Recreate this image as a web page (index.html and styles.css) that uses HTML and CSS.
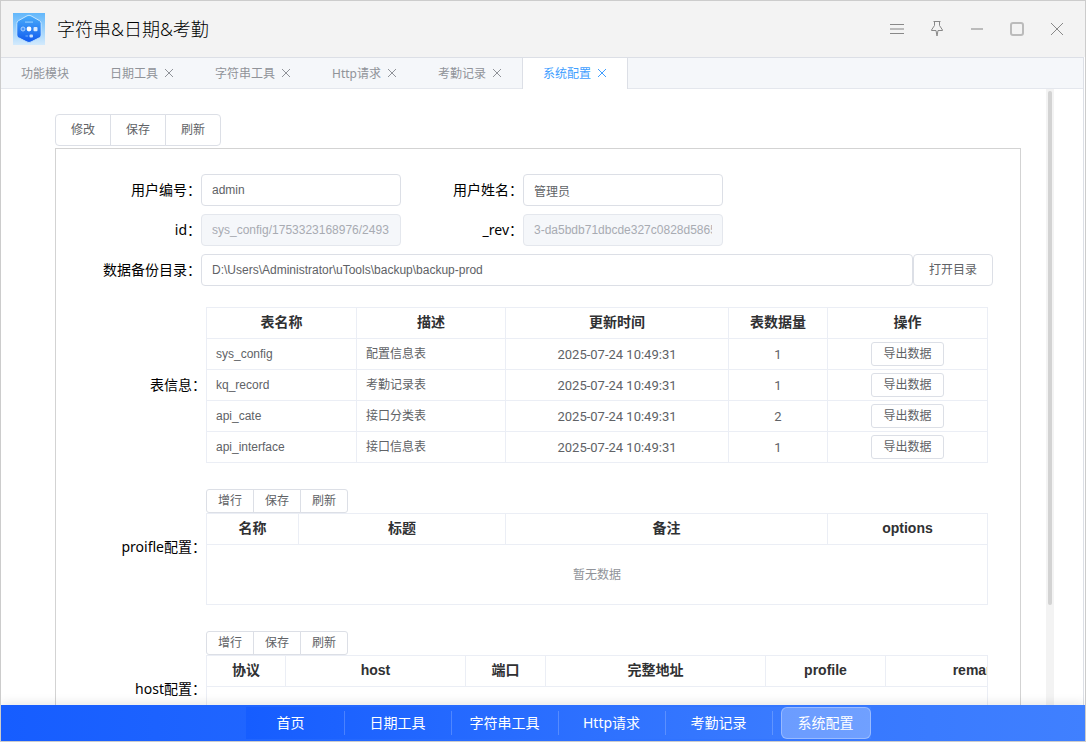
FILE: index.html
```html
<!DOCTYPE html>
<html lang="zh-CN">
<head>
  <meta charset="UTF-8" />
  <title>字符串&amp;日期&amp;考勤</title>
  <link rel="stylesheet" href="styles.css">
</head>
<body>
  <header class="titlebar">
    <svg class="logo" viewBox="0 0 32 32" aria-hidden="true">
      <defs>
        <linearGradient id="logoBg" x1="0" y1="0" x2="0" y2="1">
          <stop offset="0" stop-color="#62b7fb" />
          <stop offset="1" stop-color="#d3eafc" />
        </linearGradient>
        <linearGradient id="logoHex" x1="0" y1="0" x2="0" y2="1">
          <stop offset="0" stop-color="#4aaefb" />
          <stop offset="1" stop-color="#1059ee" />
        </linearGradient>
      </defs>
      <rect width="32" height="32" fill="url(#logoBg)" />
      <path d="M14 2.800q2-1.100 4 0l8.600 4.900q1.600 1 1.600 2.800v11.500q0 1.800-1.600 2.700l-8.600 4.300q-2 1-4 0l-8.600-4.300q-1.600-.9-1.600-2.700v-11.500q0-1.800 1.600-2.800z" fill="url(#logoHex)" stroke="#c4e5ff" />
      <rect x="12" y="8.500" width="8" height="1.200" fill="#8ecbff" />
      <circle cx="10" cy="16" r="2" fill="#4a96fa" stroke="#a8d0ff" />
      <circle cx="16" cy="16" r="2.400" fill="#fff" />
      <rect x="20.500" y="14" width="4" height="4.200" rx="1" fill="#d8eaff" />
      <rect x="12.500" y="22.500" width="2.500" height="1" fill="#75b3ff" />
      <rect x="16.500" y="21.500" width="3.500" height="3" rx="1" fill="#c8e0ff" />
    </svg>
    <h1>字符串&amp;日期&amp;考勤</h1>
    <div class="window-actions">
      <button type="button" aria-label="菜单">
        <svg viewBox="0 0 16 16"><path d="M1 3.500h14M1 12.500h14" /><path class="soft" d="M1 8h14" /></svg>
      </button>
      <button type="button" aria-label="置顶">
        <svg viewBox="0 0 16 16"><path d="M4.500 .5h7M5.500 .5v4l-3 4.500v.5h4.500l1 5.500 1-5.500h4.500v-.5l-3-4.500v-4" /></svg>
      </button>
      <button type="button" aria-label="最小化">
        <svg viewBox="0 0 16 16"><path class="soft" d="M2 8h12" /></svg>
      </button>
      <button type="button" aria-label="最大化">
        <svg viewBox="0 0 16 16"><rect class="soft" x="2" y="2" width="12" height="12" rx="2" /></svg>
      </button>
      <button type="button" aria-label="关闭">
        <svg viewBox="0 0 16 16"><path d="M2 2l12 12M14 2l-12 12" /></svg>
      </button>
    </div>
  </header>

  <div class="workspace">
    <nav class="tabs">
      <a class="tab" href="#">功能模块</a>
      <a class="tab" href="#">日期工具<svg viewBox="0 0 10 10"><path d="M1 0l8 8M9 0l-8 8" /></svg></a>
      <a class="tab" href="#">字符串工具<svg viewBox="0 0 10 10"><path d="M1 0l8 8M9 0l-8 8" /></svg></a>
      <a class="tab" href="#">Http请求<svg viewBox="0 0 10 10"><path d="M1 0l8 8M9 0l-8 8" /></svg></a>
      <a class="tab" href="#">考勤记录<svg viewBox="0 0 10 10"><path d="M1 0l8 8M9 0l-8 8" /></svg></a>
      <a class="tab active" href="#">系统配置<svg viewBox="0 0 10 10"><path d="M1 0l8 8M9 0l-8 8" /></svg></a>
    </nav>

    <div class="content">
      <main class="page">
        <div class="btn-group">
          <button type="button" class="btn">修改</button>
          <button type="button" class="btn">保存</button>
          <button type="button" class="btn">刷新</button>
        </div>

        <section class="card">
          <form class="form">
            <div class="field-row">
              <label for="userCode">用户编号：</label>
              <input id="userCode" type="text" value="admin" />
              <label for="userName" class="second">用户姓名：</label>
              <input id="userName" type="text" value="管理员" />
            </div>
            <div class="field-row">
              <label for="configId">id：</label>
              <input id="configId" type="text" value="sys_config/1753323168976/2493" disabled />
              <label for="rev" class="second">_rev：</label>
              <input id="rev" type="text" value="3-da5bdb71dbcde327c0828d5865" disabled />
            </div>
            <div class="field-row">
              <label for="backupDir">数据备份目录：</label>
              <input id="backupDir" class="grow" type="text" value="D:\Users\Administrator\uTools\backup\backup-prod" />
              <button type="button" class="btn">打开目录</button>
            </div>
          </form>

          <div class="block">
            <div class="block-label" id="tableInfo">表信息：</div>
            <div class="block-body">
              <div class="grid">
                <table aria-labelledby="tableInfo">
                  <thead>
                    <tr>
                      <th class="w150">表名称</th>
                      <th class="w149">描述</th>
                      <th>更新时间</th>
                      <th class="w99">表数据量</th>
                      <th class="w159">操作</th>
                    </tr>
                  </thead>
                  <tbody>
                    <tr>
                      <td>sys_config</td>
                      <td>配置信息表</td>
                      <td class="num">2025-07-24 10:49:31</td>
                      <td class="num">1</td>
                      <td class="center"><button type="button" class="btn small">导出数据</button></td>
                    </tr>
                    <tr>
                      <td>kq_record</td>
                      <td>考勤记录表</td>
                      <td class="num">2025-07-24 10:49:31</td>
                      <td class="num">1</td>
                      <td class="center"><button type="button" class="btn small">导出数据</button></td>
                    </tr>
                    <tr>
                      <td>api_cate</td>
                      <td>接口分类表</td>
                      <td class="num">2025-07-24 10:49:31</td>
                      <td class="num">2</td>
                      <td class="center"><button type="button" class="btn small">导出数据</button></td>
                    </tr>
                    <tr>
                      <td>api_interface</td>
                      <td>接口信息表</td>
                      <td class="num">2025-07-24 10:49:31</td>
                      <td class="num">1</td>
                      <td class="center"><button type="button" class="btn small">导出数据</button></td>
                    </tr>
                  </tbody>
                </table>
              </div>
            </div>
          </div>

          <div class="block">
            <div class="block-label" id="profileInfo">proifle配置：</div>
            <div class="block-body">
              <div class="btn-group">
                <button type="button" class="btn small">增行</button>
                <button type="button" class="btn small">保存</button>
                <button type="button" class="btn small">刷新</button>
              </div>
              <div class="grid">
                <table aria-labelledby="profileInfo">
                  <thead>
                    <tr>
                      <th class="w92">名称</th>
                      <th class="w207">标题</th>
                      <th>备注</th>
                      <th class="w159">options</th>
                    </tr>
                  </thead>
                  <tbody>
                    <tr><td class="empty" colspan="4">暂无数据</td></tr>
                  </tbody>
                </table>
              </div>
            </div>
          </div>

          <div class="block">
            <div class="block-label" id="hostInfo">host配置：</div>
            <div class="block-body">
              <div class="btn-group">
                <button type="button" class="btn small">增行</button>
                <button type="button" class="btn small">保存</button>
                <button type="button" class="btn small">刷新</button>
              </div>
              <div class="grid">
                <table aria-labelledby="hostInfo">
                  <thead>
                    <tr>
                      <th class="w79">协议</th>
                      <th class="w180">host</th>
                      <th class="w80">端口</th>
                      <th class="w220">完整地址</th>
                      <th class="w120">profile</th>
                      <th class="w180">remark</th>
                    </tr>
                  </thead>
                  <tbody>
                    <tr><td class="empty" colspan="6"></td></tr>
                  </tbody>
                </table>
              </div>
            </div>
          </div>
        </section>
      </main>
      <div class="scroll-track"><div class="scroll-thumb"></div></div>
    </div>
  </div>

  <nav class="bottom-nav">
    <ul>
      <li><a href="#">首页</a></li>
      <li><a href="#">日期工具</a></li>
      <li><a href="#">字符串工具</a></li>
      <li><a href="#">Http请求</a></li>
      <li><a href="#">考勤记录</a></li>
      <li><a href="#" class="active">系统配置</a></li>
    </ul>
  </nav>
</body>
</html>
```
FILE: styles.css
```css
* {
  box-sizing: border-box;
}
body {
  display: flex;
  flex-direction: column;
  height: 100vh;
  margin: 0;
  overflow: hidden;
  border: 1px solid #ccc;
  background: #fff;
  color: #000;
  font-family: "Noto Sans", "Noto Sans CJK SC", sans-serif;
  font-size: 14px;
}
a {
  text-decoration: none;
}
button, input {
  font-family: "Liberation Sans", "Noto Sans CJK SC", sans-serif;
  font-size: 12px;
}

/* title bar */
.titlebar {
  display: flex;
  flex: none;
  align-items: center;
  height: 56px;
  padding: 0 8px 0 12px;
  background: #f3f3f3;
}
.logo {
  width: 32px;
  height: 32px;
}
h1 {
  margin: 0 auto 0 12px;
  color: #000;
  font-size: 18px;
  font-weight: 300;
  line-height: 32px;
}
.window-actions {
  display: flex;
}
.window-actions button {
  display: flex;
  align-items: center;
  justify-content: center;
  width: 40px;
  height: 40px;
  padding: 0;
  border: none;
  background: none;
}
.window-actions svg {
  width: 16px;
  height: 16px;
  fill: none;
  stroke: #888;
}
.window-actions .soft {
  stroke: #bbb;
  stroke-width: 2;
}

/* module tabs */
.workspace {
  display: flex;
  flex: 1;
  flex-direction: column;
  min-height: 0;
  margin-right: 1px;
  border-top: 1px solid #dcdfe6;
  border-right: 1px solid #dcdfe6;
}
.tabs {
  display: flex;
  flex: none;
  height: 31px;
  background: #f5f7fa;
  box-shadow: inset 0 -1px #e4e7ed;
}
.tab {
  display: flex;
  align-items: center;
  gap: 6px;
  padding: 0 20px;
  border-left: 1px solid transparent;
  color: #909399;
  font-size: 12px;
  line-height: 30px;
}
.tab:first-child {
  border-left: none;
}
.tab svg {
  width: 10px;
  height: 10px;
  fill: none;
  stroke: currentColor;
}
.tab.active {
  border-right: 1px solid #dcdfe6;
  border-left-color: #dcdfe6;
  background: #fff;
  color: #409eff;
}

/* page */
.content {
  display: flex;
  flex: 1;
  min-height: 0;
  overflow: hidden;
}
.page {
  flex: 1;
  min-width: 0;
  padding: 25px 25px 0 54px;
}
.scroll-track {
  width: 8px;
  margin-right: 29px;
  padding: 2px;
  background: #f3f3f3;
}
.scroll-thumb {
  height: 84%;
  border-radius: 2px;
  background: #d3d3d3;
}
.card {
  margin-top: 2px;
  padding: 25px 27px 26px 0;
  border: 1px solid #d3d3d3;
}

.btn {
  flex: none;
  height: 32px;
  padding: 0 15px;
  border: 1px solid #dcdfe6;
  border-radius: 4px;
  background: #fff;
  color: #606266;
  line-height: 30px;
  cursor: pointer;
}
.btn.small {
  height: 24px;
  padding: 0 11px;
  border-radius: 3px;
  line-height: 22px;
}
.btn:hover {
  color: #409eff;
}
.btn-group {
  display: flex;
}
.btn-group .btn + .btn {
  margin-left: -1px;
}
.btn-group .btn:not(:last-child) {
  border-top-right-radius: 0;
  border-bottom-right-radius: 0;
}
.btn-group .btn:not(:first-child) {
  border-top-left-radius: 0;
  border-bottom-left-radius: 0;
}

/* form */
.form {
  display: flex;
  flex-direction: column;
  gap: 8px;
}
.field-row {
  display: flex;
  align-items: center;
}
label {
  width: 145px;
  line-height: 32px;
  text-align: right;
}
label.second {
  width: 122px;
}
input {
  width: 200px;
  height: 32px;
  padding: 0 10px;
  border: 1px solid #dcdfe6;
  border-radius: 4px;
  background: #fff;
  color: #606266;
}
input:disabled {
  border-color: #e4e7ed;
  background: #f5f7fa;
  color: #a8abb2;
}
input.grow {
  flex: 1;
}

/* tables */
.block {
  display: flex;
  align-items: center;
  margin-top: 26px;
  padding-right: 5px;
}
.form + .block {
  margin-top: 21px;
}
.block-label {
  flex: none;
  width: 150px;
  line-height: 20px;
  text-align: right;
}
.block-body {
  flex: 1;
  min-width: 0;
}
.grid {
  overflow: hidden;
  border: 1px solid #ebeef5;
  border-bottom: none;
}
table {
  width: 100%;
  border-spacing: 0;
  table-layout: fixed;
  font-family: "Liberation Sans", "Noto Sans CJK SC", sans-serif;
}
th, td {
  height: 31px;
  padding: 0 9px;
  border-right: 1px solid #ebeef5;
  border-bottom: 1px solid #ebeef5;
  line-height: 20px;
}
th:last-child, td:last-child {
  border-right: none;
}
th {
  padding-bottom: 2px;
  color: #303133;
  font-size: 14px;
  font-weight: 700;
  text-align: center;
}
td {
  color: #606266;
  font-size: 12px;
}
td .btn {
  display: block;
  margin: 0 auto;
}
td.num {
  padding-top: 2px;
  font-family: Roboto, sans-serif;
  font-size: 13px;
  text-align: center;
}
td.empty {
  height: 60px;
  color: #909399;
  text-align: center;
}
.w79 { width: 79px; }
.w80 { width: 80px; }
.w92 { width: 92px; }
.w99 { width: 99px; }
.w120 { width: 120px; }
.w149 { width: 149px; }
.w150 { width: 150px; }
.w159 { width: 159px; }
.w180 { width: 180px; }
.w207 { width: 207px; }
.w220 { width: 220px; }

/* bottom navigation */
.bottom-nav {
  z-index: 1;
  display: flex;
  flex: none;
  justify-content: center;
  height: 36px;
  padding: 2px 0 2px 30px;
  background: linear-gradient(90deg, #165dff, #4080ff);
  box-shadow: 0 -2px 10px rgba(0, 0, 0, 0.1);
}
.bottom-nav ul {
  display: flex;
  margin: 0;
  padding: 0;
  background: linear-gradient(90deg, #165dff, #4080ff);
  list-style: none;
}
.bottom-nav li {
  display: flex;
  align-items: center;
}
.bottom-nav li + li::before {
  width: 1px;
  height: 24px;
  margin: 0 8px;
  background: rgba(255, 255, 255, 0.2);
  content: "";
}
.bottom-nav a {
  width: 90px;
  height: 32px;
  border: 1px solid transparent;
  border-radius: 6px;
  color: #fff;
  line-height: 30px;
  text-align: center;
}
.bottom-nav a.active {
  border-color: rgba(255, 255, 255, 0.3);
  background: rgba(255, 255, 255, 0.25);
}
```
